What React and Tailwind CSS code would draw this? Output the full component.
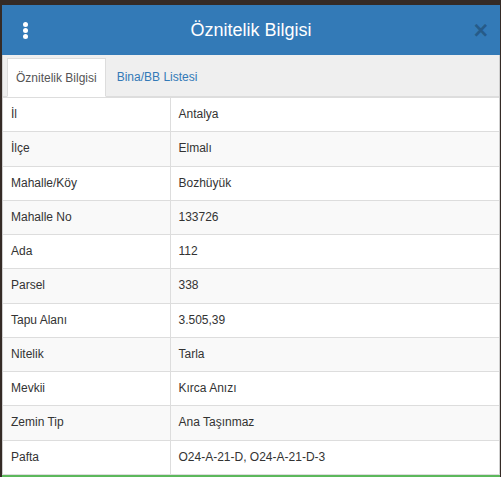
import React from "react";

const rows = [
  ["İl", "Antalya"],
  ["İlçe", "Elmalı"],
  ["Mahalle/Köy", "Bozhüyük"],
  ["Mahalle No", "133726"],
  ["Ada", "112"],
  ["Parsel", "338"],
  ["Tapu Alanı", "3.505,39"],
  ["Nitelik", "Tarla"],
  ["Mevkii", "Kırca Anızı"],
  ["Zemin Tip", "Ana Taşınmaz"],
  ["Pafta", "O24-A-21-D, O24-A-21-D-3"],
];

export default function App() {
  return (
    <div
      className="w-[501px] h-[477px] overflow-hidden bg-[#352b26] pt-[5px] pl-[2px] pr-[1px]"
      style={{ fontFamily: '"Liberation Sans", Arial, sans-serif' }}
    >
      <div className="relative h-full bg-white border-l border-r border-[#cfcfcf] flex flex-col">
        {/* header */}
        <div className="relative h-[50px] shrink-0 bg-[#337ab7] -mx-px flex items-center justify-center">
          <div className="absolute left-[21px] top-[17px] flex flex-col gap-[1px]">
            <span className="block w-[5px] h-[5px] rounded-full bg-white" />
            <span className="block w-[5px] h-[5px] rounded-full bg-white" />
            <span className="block w-[5px] h-[5px] rounded-full bg-white" />
          </div>
          <h4 className="text-white text-[18px] leading-none font-normal">Öznitelik Bilgisi</h4>
          <span className="absolute right-[12px] top-[13px] text-[25px] font-bold leading-[24px] text-black/25">
            ×
          </span>
        </div>

        {/* tabs */}
        <div className="h-[42px] shrink-0 bg-[#efefef] border-b border-[#dddddd] flex items-end pl-[4px]">
          <div className="h-[39px] -mb-px bg-white border border-[#dddddd] border-b-white px-[8px] flex items-center text-[12px] text-[#555555]">
            Öznitelik Bilgisi
          </div>
          <div className="h-[39px] ml-[2px] px-[9px] flex items-center text-[12px] text-[#337ab7]">
            Bina/BB Listesi
          </div>
        </div>

        {/* attribute table */}
        <table className="w-full border-collapse text-[12px] text-[#333333]">
          <tbody>
            {rows.map(([k, v], i) => (
              <tr key={k} className={i % 2 === 1 ? "bg-[#f9f9f9]" : "bg-white"}>
                <td className="w-[167px] border-t border-[#dddddd] px-[8px] py-[8px] leading-[17.26px]">
                  {k}
                </td>
                <td className="border-t border-l border-[#dddddd] px-[8px] py-[8px] leading-[17.26px]">
                  {v}
                </td>
              </tr>
            ))}
          </tbody>
        </table>

        {/* footer */}
        <div className="flex-1 -mx-px bg-[#5cb85c] border-t border-[#dddddd]" />
      </div>
    </div>
  );
}
